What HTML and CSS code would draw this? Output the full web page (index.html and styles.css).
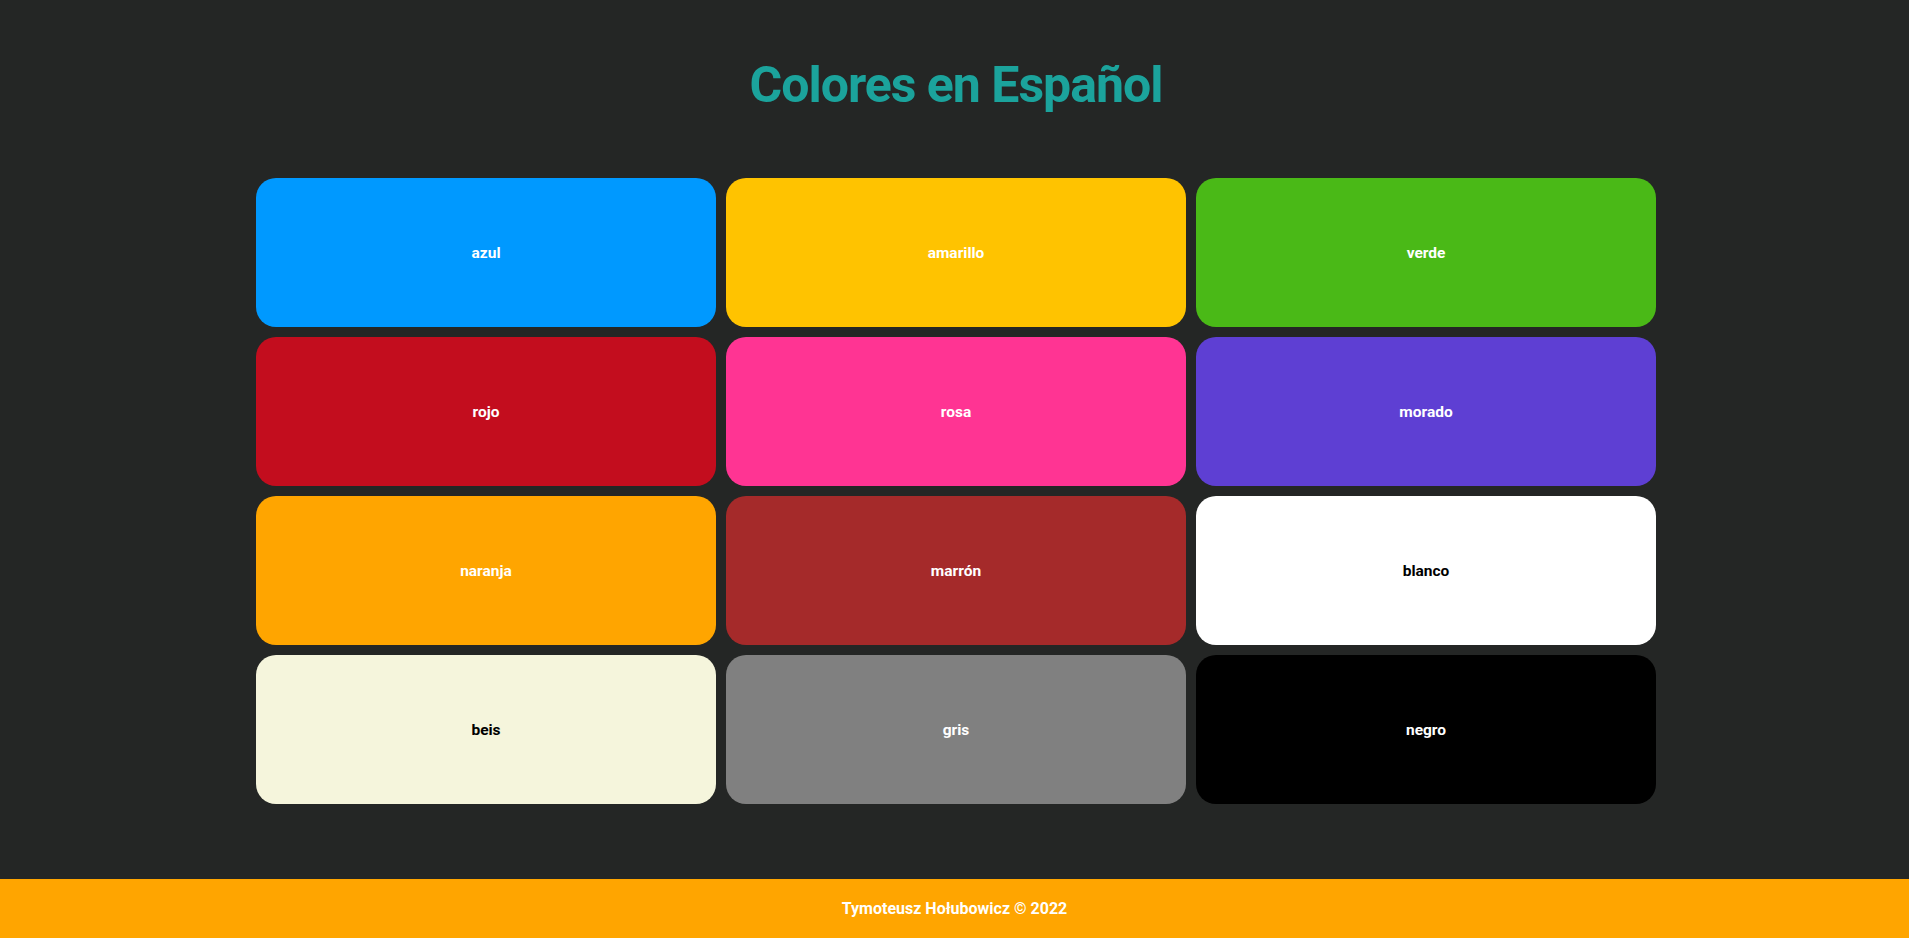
FILE: index.html
```html
<!DOCTYPE html>
<html lang="es">
<head>
<meta charset="utf-8">
<title>Colores en Español</title>
<link rel="stylesheet" href="styles.css">
</head>
<body>
<main class="page">
  <h1 class="title">Colores en Español</h1>
  <div class="grid">
    <div class="card azul">azul</div>
    <div class="card amarillo">amarillo</div>
    <div class="card verde">verde</div>
    <div class="card rojo">rojo</div>
    <div class="card rosa">rosa</div>
    <div class="card morado">morado</div>
    <div class="card naranja">naranja</div>
    <div class="card marron">marrón</div>
    <div class="card blanco dark">blanco</div>
    <div class="card beis dark">beis</div>
    <div class="card gris">gris</div>
    <div class="card negro">negro</div>
  </div>
</main>
<footer class="footer">Tymoteusz Hołubowicz © 2022</footer>
</body>
</html>
```
FILE: styles.css
```css
html, body {
  margin: 0;
  padding: 0;
}
body {
  background: #242625;
  min-height: 100vh;
  display: flex;
  flex-direction: column;
  font-family: Roboto, "Liberation Sans", sans-serif;
}
.page {
  flex: 1;
  display: flex;
  flex-direction: column;
  align-items: center;
}
.title {
  margin: 55px 0 0;
  font-size: 50px;
  line-height: 60px;
  font-weight: 700;
  color: #1ba39c;
  letter-spacing: -1px;
  padding-left: 3px;
}
.grid {
  margin: 63px 0 0 3px;
  display: grid;
  grid-template-columns: repeat(3, 460px);
  grid-auto-rows: 149px;
  gap: 10px;
}
.card {
  border-radius: 20px;
  display: flex;
  align-items: center;
  justify-content: center;
  color: #fff;
  font-size: 15.5px;
  font-weight: 700;
}
.card.dark { color: #000; }
.azul { background: #0099ff; }
.amarillo { background: #ffc300; }
.verde { background: #4ab917; }
.rojo { background: #c30d1e; }
.rosa { background: #ff3493; }
.morado { background: #5e3fd3; }
.naranja { background: #ffa500; }
.marron { background: #a52a2a; }
.blanco { background: #ffffff; }
.beis { background: #f5f5dc; }
.gris { background: #808080; }
.negro { background: #000000; }
.footer {
  background: #ffa500;
  height: 59px;
  line-height: 59px;
  text-align: center;
  color: #fff;
  font-size: 16px;
  font-weight: 700;
}
```
